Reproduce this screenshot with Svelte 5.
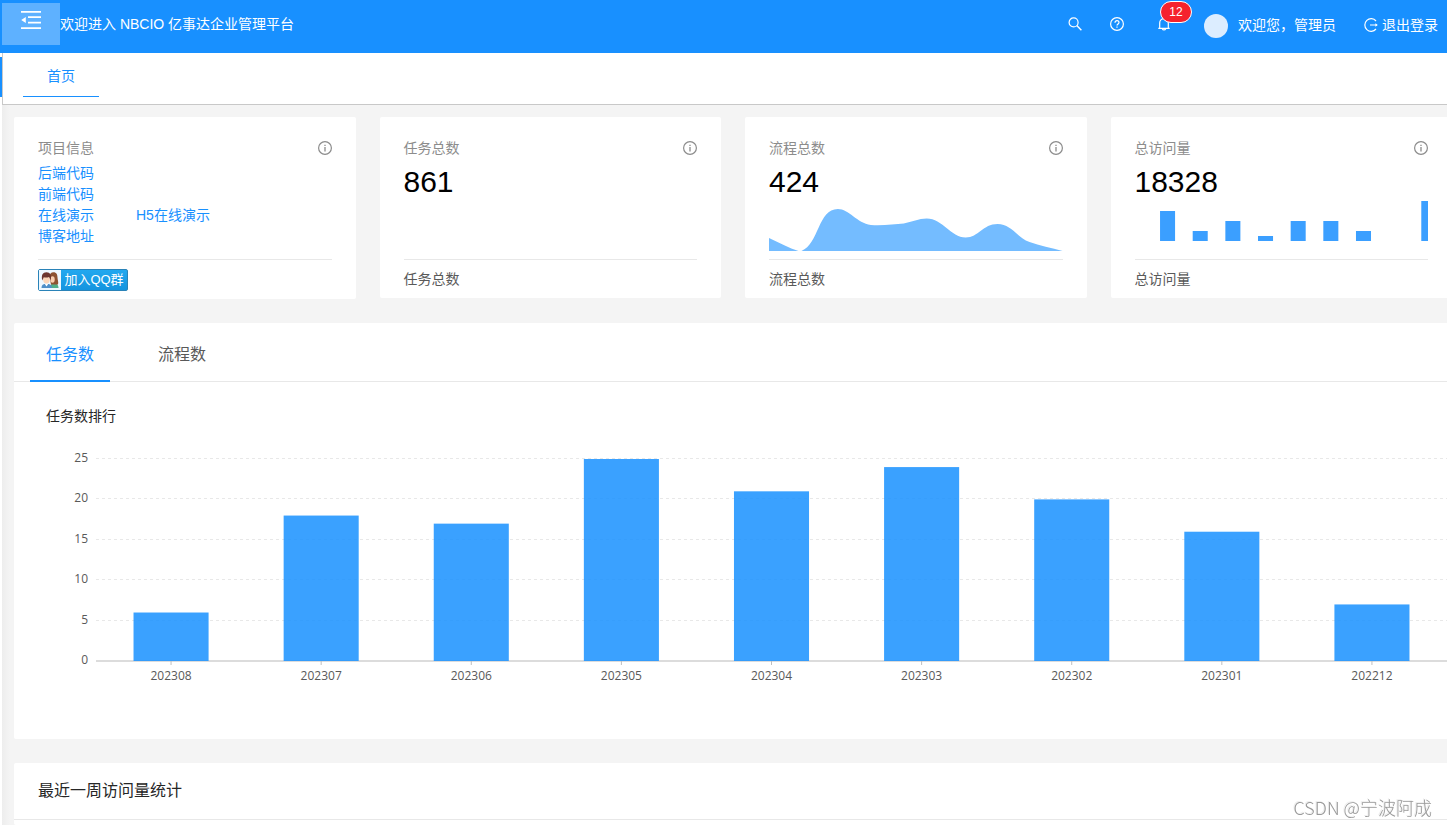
<script lang="ts">
	const PLOT_LEFT = 50;
	const PLOT_TOP = 33;
	const PLOT_BOTTOM = 235;
	const MAX_VALUE = 25;

	const ticks = [0, 5, 10, 15, 20, 25];
	const visits = [30, 10, 20, 5, 20, 20, 10, 0, 40];

	const tasks = [
		{ month: '202308', value: 6 },
		{ month: '202307', value: 18 },
		{ month: '202306', value: 17 },
		{ month: '202305', value: 25 },
		{ month: '202304', value: 21 },
		{ month: '202303', value: 24 },
		{ month: '202302', value: 20 },
		{ month: '202301', value: 16 },
		{ month: '202212', value: 7 }
	];

	const tabs = ['任务数', '流程数'];
	let activeTab = $state(0);
	let chartWidth = $state(1401);

	let step = $derived((chartWidth - PLOT_LEFT) / tasks.length);

	function yOf(value: number) {
		return PLOT_BOTTOM - (value / MAX_VALUE) * (PLOT_BOTTOM - PLOT_TOP);
	}
</script>

{#snippet cardHead(title: string)}
	<div class="card-head">
		<span>{title}</span>
		<button class="info" aria-label="说明">
			<svg viewBox="0 0 14 14" width="14" height="14" fill="none" stroke="currentColor">
				<circle cx="7" cy="7" r="6.4" stroke-width="1.2" />
				<path d="M7 6v4.4M7 3.7v1.3" stroke-width="1.3" />
			</svg>
		</button>
	</div>
{/snippet}

<header>
	<button class="toggle" aria-label="收起菜单">
		<svg viewBox="0 0 20 18" width="20" height="18" fill="currentColor">
			<path d="M0 0h20v1.7H0zM7 5.3h13V7H7zM7 10.8h13v1.7H7zM0 16.2h20v1.7H0zM4.8 5.900v6L.2 8.900z" />
		</svg>
	</button>
	<span class="welcome">欢迎进入 NBCIO 亿事达企业管理平台</span>
	<div class="actions">
		<button aria-label="搜索">
			<svg viewBox="0 0 14 14" width="14" height="14" fill="none" stroke="currentColor" stroke-width="1.2">
				<circle cx="5.6" cy="5.4" r="4.5" />
				<path d="M8.8 8.6l4.600 4.600" stroke-width="1.4" />
			</svg>
		</button>
		<a href="#help" aria-label="帮助">
			<svg viewBox="0 0 14 14" width="14" height="14" fill="none" stroke="currentColor" stroke-width="1.2">
				<circle cx="7" cy="7" r="6.4" />
				<path d="M5 5.7c0-1.3.9-2.1 2-2.1s2 .8 2 1.900c0 1.4-2 1.5-2 3.1M7 9.5v1.2" />
			</svg>
		</a>
		<button class="bell" aria-label="通知">
			<svg viewBox="0 0 14 14" width="14" height="14" fill="none" stroke="currentColor" stroke-width="1.2">
				<path d="M1.300 11.4h11.4M2.700 11.2V6a4.3 4.3 0 0 1 8.600 0v5.2M7 1.7V.3M5.300 11.8a1.8 1.8 0 0 0 3.400 0" />
			</svg>
			<span class="badge">12</span>
		</button>
		<span class="user"><i class="avatar"></i>欢迎您，管理员</span>
		<a class="logout" href="#logout">
			<svg viewBox="0 0 14 14" width="14" height="14" fill="none" stroke="currentColor" stroke-width="1.2">
				<path d="M12 3A6.3 6.3 0 1 0 12 11M6 7h7" />
				<path d="M11.4 5.2L13.800 7l-2.400 1.800z" fill="currentColor" stroke="none" />
			</svg>
			退出登录
		</a>
	</div>
</header>

<div class="shell">
	<aside><div class="current"></div></aside>
	<main>
		<nav class="pages">
			<a href="#home">首页</a>
		</nav>

		<div class="content">
			<div class="cards">
				<section class="card">
					{@render cardHead('项目信息')}
					<div class="card-main links">
						<a href="#backend">后端代码</a>
						<a href="#frontend">前端代码</a>
						<div class="pair">
							<a href="#demo">在线演示</a>
							<a href="#h5">H5在线演示</a>
						</div>
						<a href="#blog">博客地址</a>
					</div>
					<div class="card-foot">
						<a class="qq" href="#qq">
							<svg viewBox="0 0 22 20" width="22" height="20">
								<rect width="22" height="20" fill="#eef8ff" />
								<path d="M11 18c0-3.500 2-5 4-5s4.500 1.500 4.500 5z" fill="#4fae88" />
								<path d="M10.500 7c0-3 1.500-4.800 4-4.800 3 0 4 2.300 4 5.300 0 2.500 1.300 4.500.5 7h-7z" fill="#8d5232" />
								<ellipse cx="13.500" cy="9.500" rx="2.200" ry="3.200" fill="#f8ceb0" />
								<path d="M2.500 18c0-3 1.500-4.300 5-4.300s5.500 1.300 5.500 4.300z" fill="#4e8fc8" />
								<path d="M5.500 13.500l2 3 2-3z" fill="#fff" />
								<ellipse cx="7.500" cy="9.500" rx="3.300" ry="4" fill="#fbd5b8" />
								<path d="M3.300 10.500C2 5 3.800 2.200 7.500 2.200s5.300 2.800 4.200 8.300C11 8.500 10.500 7.500 10 7 8 7.800 6 7.500 4.800 7.200z" fill="#6d3630" />
							</svg>
							<span>加入QQ群</span>
						</a>
					</div>
				</section>

				<section class="card">
					{@render cardHead('任务总数')}
					<div class="card-main"><div class="total">861</div></div>
					<div class="card-foot">任务总数</div>
				</section>

				<section class="card">
					{@render cardHead('流程总数')}
					<div class="card-main">
						<div class="total">424</div>
						<svg class="area" viewBox="0 0 294 46" preserveAspectRatio="none">
							<path
								d="M0 33C11 38 20 43 29.500 46H32.500C50 39 49 4 69 4C80 4 88 18 102 20C114 21 126 19 135 18.500C143 17 150 13.500 158 13.500C174 13.500 182 32.500 197 32.500C210 32.500 214 19 229 19C243 19 249 33 261 37C271 40.500 283 43 294 46H0Z"
							/>
						</svg>
					</div>
					<div class="card-foot">流程总数</div>
				</section>

				<section class="card">
					{@render cardHead('总访问量')}
					<div class="card-main">
						<div class="total">18328</div>
						<svg class="mini" viewBox="0 0 293 40" preserveAspectRatio="none">
							{#each visits as v, i}
								<rect x={25 + i * 32.6} y={40 - v} width="15" height={v} />
							{/each}
						</svg>
					</div>
					<div class="card-foot">总访问量</div>
				</section>
			</div>

			<section class="panel">
				<div class="tabs" role="tablist">
					{#each tabs as tab, i}
						<button role="tab" aria-selected={activeTab === i} class:active={activeTab === i} onclick={() => (activeTab = i)}>
							{tab}
						</button>
					{/each}
				</div>
				<div class="panel-body">
					<h4>{tabs[activeTab]}排行</h4>
					<div class="chart" bind:clientWidth={chartWidth}>
						<svg width="100%" height="289">
							{#each ticks as t}
								<text class="tick" x={PLOT_LEFT - 8} y={yOf(t) + 3}>{t}</text>
								{#if t > 0}
									<line class="grid" x1={PLOT_LEFT} x2={chartWidth} y1={Math.round(yOf(t)) - 0.5} y2={Math.round(yOf(t)) - 0.5} />
								{/if}
							{/each}
							<line class="axis" x1={PLOT_LEFT} x2={chartWidth} y1={PLOT_BOTTOM} y2={PLOT_BOTTOM} />
							{#each tasks as d, i}
								{@const cx = PLOT_LEFT + step * (i + 0.5)}
								<line class="mark" x1={cx} x2={cx} y1={PLOT_BOTTOM} y2={PLOT_BOTTOM + 4} />
								<rect class="bar" x={cx - step / 4} y={yOf(d.value)} width={step / 2} height={PLOT_BOTTOM - yOf(d.value)} />
								<text class="month" x={cx} y={PLOT_BOTTOM + 19}>{d.month}</text>
							{/each}
						</svg>
					</div>
				</div>
			</section>

			<section class="panel last">
				<h3>最近一周访问量统计</h3>
			</section>
		</div>
	</main>
</div>

<div class="watermark">CSDN @宁波阿成</div>

<style>
	:global(body) {
		overflow-x: hidden;
		background: #fff;
		color: #262626;
		font: 14px/21px 'Liberation Sans', 'Noto Sans CJK SC', sans-serif;
	}

	:global(#app) {
		display: flex;
		flex-direction: column;
		min-height: 100vh;
		overflow: hidden;
	}

	a {
		color: #1890ff;
		text-decoration: none;
	}

	button {
		padding: 0;
		border: 0;
		background: none;
		color: inherit;
		font: inherit;
		cursor: pointer;
	}

	svg {
		display: block;
	}

	header {
		display: flex;
		align-items: center;
		box-sizing: border-box;
		height: 53px;
		padding: 0 9px 5px 2px;
		background: #1890ff;
		color: #fff;
		white-space: nowrap;
	}

	.toggle {
		display: flex;
		justify-content: center;
		width: 58px;
		height: 42px;
		padding-top: 8px;
		box-sizing: border-box;
		background: #5eb1ff;
	}

	.actions {
		display: flex;
		align-items: center;
		gap: 28px;
		margin-left: auto;
	}

	.actions a {
		color: #fff;
	}

	.bell {
		position: relative;
		padding: 0 5px;
	}

	.badge {
		position: absolute;
		top: -16px;
		left: 8px;
		width: 30px;
		height: 20px;
		border: 1px solid #fff;
		border-radius: 11px;
		background: #f5222d;
		font-size: 12px;
		line-height: 20px;
	}

	.user {
		display: flex;
		align-items: center;
		gap: 10px;
		padding-top: 3px;
	}

	.avatar {
		width: 24px;
		height: 24px;
		border-radius: 50%;
		background: #dcedff;
	}

	.logout {
		display: flex;
		align-items: center;
		gap: 4px;
		padding-top: 2px;
	}

	.shell {
		display: flex;
		flex: 1;
	}

	aside {
		width: 2px;
		padding-top: 4px;
	}

	.current {
		height: 40px;
		background: #1890ff;
	}

	main {
		display: flex;
		flex: 1;
		flex-direction: column;
		min-width: 0;
	}

	.pages {
		height: 51px;
		padding-left: 20px;
		border-bottom: 1px solid #c8c8c8;
		border-left: 1px solid #c8c8c8;
	}

	.pages a {
		display: inline-block;
		padding: 13px 24px 9px;
		border-bottom: 1px solid #1890ff;
	}

	.content {
		display: flex;
		flex: 1;
		flex-direction: column;
		gap: 24px;
		padding: 12px 0 0 12px;
		margin-right: -5px;
		background: linear-gradient(90deg, #ededed, #f4f4f4 8px);
	}

	.cards {
		display: grid;
		grid-template-columns: repeat(4, 1fr);
		align-items: start;
		gap: 24px;
	}

	.card {
		padding: 20px 24px 8px;
		border-radius: 2px;
		background: #fff;
	}

	.card-head {
		display: flex;
		align-items: center;
		justify-content: space-between;
		height: 22px;
		color: #8c8c8c;
	}

	.card-main {
		box-sizing: border-box;
		height: 100px;
		padding-top: 4px;
	}

	.links {
		display: flex;
		flex-direction: column;
		align-items: flex-start;
	}

	.pair {
		display: flex;
		gap: 42px;
	}

	.total {
		color: #000;
		font-size: 30px;
		line-height: 38px;
	}

	.area {
		width: 100%;
		height: 46px;
		margin-top: 4px;
		fill: #74bcff;
	}

	.mini {
		width: 100%;
		height: 40px;
		fill: #3b9fff;
	}

	.card-foot {
		padding-top: 9px;
		border-top: 1px solid #e8e8e8;
		color: #595959;
	}

	.qq {
		display: flex;
		box-sizing: border-box;
		width: 90px;
		height: 22px;
		border: 1px solid #2a83b8;
		border-radius: 2px;
		background: linear-gradient(#22a8ef, #1494df);
		color: #fff;
		font-size: 13px;
		line-height: 20px;
		white-space: nowrap;
	}

	.qq span {
		flex: 1;
		text-align: center;
	}

	.panel {
		border-radius: 2px;
		background: #fff;
	}

	.tabs {
		display: flex;
		gap: 32px;
		height: 58px;
		padding-left: 16px;
		border-bottom: 1px solid #e8e8e8;
	}

	.tabs button {
		box-sizing: border-box;
		height: 59px;
		padding: 6px 16px 0;
		border-bottom: 2px solid transparent;
		color: #595959;
		font-size: 16px;
	}

	.tabs .active {
		border-color: #1890ff;
		color: #1890ff;
	}

	.panel-body {
		padding: 24px 5px 24px 32px;
	}

	h4 {
		margin: 0;
		font-size: 14px;
		font-weight: 400;
		line-height: 20px;
	}

	.chart {
		font: 12px 'Open Sans', 'Noto Sans', sans-serif;
	}

	.chart text {
		fill: #595959;
	}

	.tick {
		text-anchor: end;
	}

	.month {
		text-anchor: middle;
	}

	.grid {
		stroke: #e8e8e8;
		stroke-dasharray: 3;
	}

	.axis {
		stroke: #dcdcdc;
		stroke-width: 2;
	}

	.mark {
		stroke: #bfbfbf;
	}

	.bar {
		fill: #1890ff;
		fill-opacity: 0.85;
	}

	.last {
		flex: 1;
	}

	h3 {
		margin: 0;
		padding-left: 24px;
		border-bottom: 1px solid #e8e8e8;
		font-size: 16px;
		font-weight: 400;
		line-height: 56px;
	}

	.watermark {
		position: fixed;
		right: 15px;
		bottom: 6px;
		color: #999;
		font: 300 18px/24px 'Noto Sans CJK SC', sans-serif;
		text-shadow: -1px -1px 0 #eee;
		pointer-events: none;
	}
</style>
